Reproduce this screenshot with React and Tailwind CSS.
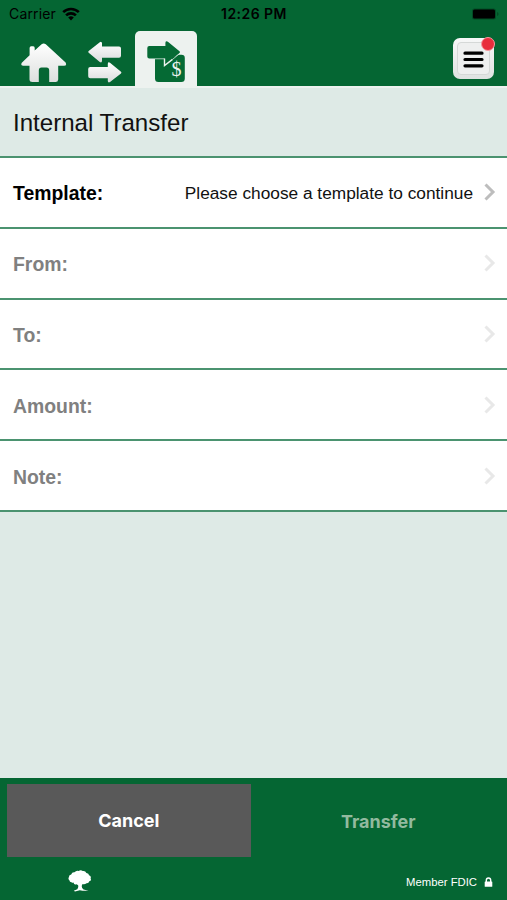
const fields = [
  { label: 'Template:', value: 'Please choose a template to continue', enabled: true },
  { label: 'From:' },
  { label: 'To:' },
  { label: 'Amount:' },
  { label: 'Note:' },
];

function StatusBar() {
  return (
    <div className="grid h-7 grid-cols-3 items-center pl-[9px] pr-[8px] font-['Inter',sans-serif] text-black">
      <div className="flex items-center gap-[6px] text-[14px] leading-7">
        <span className="tracking-[0.15px]">Carrier</span>
        <svg className="h-[14px] w-[18px]" viewBox="0 0 18 14" fill="none" stroke="currentColor" strokeWidth="2.6">
          <path d="M1.2 5.2a11 11 0 0 1 15.6 0" />
          <path d="M4.1 8.4a7 7 0 0 1 9.8 0" />
          <path d="M9 13.6 6.2 10.6a4 4 0 0 1 5.6 0Z" fill="currentColor" stroke="none" />
        </svg>
      </div>
      <div className="text-center text-[14px] font-semibold leading-7 tracking-[0.45px] whitespace-nowrap">12:26 PM</div>
      <div className="flex justify-end">
        <svg className="h-[12px] w-[27px]" viewBox="0 0 27 12">
          <rect x="0" y="0.5" width="24" height="11" rx="2.5" fill="#034c25" />
          <rect x="1" y="1.5" width="22" height="9" rx="1.5" fill="#000" />
          <path d="M25 4v4q1.6-.5 1.6-2t-1.6-2" fill="#034c25" />
        </svg>
      </div>
    </div>
  );
}

function HomeIcon() {
  return (
    <svg className="h-[40px] w-[46px]" viewBox="0 0 46 40">
      <defs>
        <linearGradient id="home" x1="0" y1="0" x2="0" y2="1">
          <stop offset="0" stopColor="#fff" />
          <stop offset="1" stopColor="#dddfde" />
        </linearGradient>
      </defs>
      <path
        d="M20.6 1.2Q22.7-.2 24.8 1.3L44.6 19.4Q46.2 22.5 43 22.8H37.2V36.5Q37 39 34.5 39H28.2V27.5Q28.2 24.4 25.5 24.4H20.5Q17.8 24.4 17.8 27.5V39H11.4Q8.6 39 8.5 36.5V22.8H2Q-.8 22.3.8 19.7L8.6 12.3V5Q8.6 3.3 10.2 3.3H12.2Q13.7 3.3 13.7 5V7.5Z"
        fill="url(#home)"
      />
    </svg>
  );
}

function TransferIcon() {
  return (
    <svg className="h-[42px] w-[35px]" viewBox="0 0 35 42">
      <defs>
        <linearGradient id="arrows" x1="0" y1="0" x2="0" y2="1">
          <stop offset="0" stopColor="#fff" />
          <stop offset="1" stopColor="#dadbdc" />
        </linearGradient>
      </defs>
      <path d="M.7 11.7Q-.2 10.8.7 10L11.8 1.2Q13.8 0 14 2.3V5.5H31Q33 5.5 33 7.5V14.7Q33 16.7 31 16.7H14V20.1Q13.7 22.3 11.8 21Z" fill="url(#arrows)" />
      <path d="M33 30.7Q33.9 31.5 33 32.4L22 41.1Q20 42 19.8 40V37.3H2.3Q.2 37.3.2 35.3V28Q.2 25.9 2.3 25.9H19.8V22.7Q20.1 20.5 22 21.7Z" fill="url(#arrows)" />
    </svg>
  );
}

function QuickTransferIcon() {
  return (
    <svg className="h-[42px] w-[39px]" viewBox="0 0 39 42">
      <path d="M8 16H27.5L31 13.8H34.5Q37.8 13.8 37.8 17V37.5Q37.8 41 34.3 41H11.5Q8 41 8 37.5Z" fill="#056a34" />
      <path
        d="M2.3 4.9H18.4V1.7Q18.8-.5 20.9.8L32.5 10.2Q33.4 11 32.5 12L18.2 23.6V17.4H2.3Q.3 17.4.3 15.4V6.9Q.3 4.9 2.3 4.9Z"
        fill="#056a34"
      />
      <path d="M17.5 17.6V24.6L25.5 18.4" fill="none" stroke="#edf2ef" strokeWidth="1.4" />
      <path d="M8 17.8H17.5M25.5 18.4 33 12.4" fill="none" stroke="#edf2ef" strokeWidth="0.7" />
      <text x="29.5" y="35" textAnchor="middle" fontSize="20" fontFamily="Liberation Serif, serif" fill="#edf2ef">$</text>
    </svg>
  );
}

function MenuButton() {
  return (
    <button className="relative flex h-[41px] w-[41px] items-center justify-center rounded-[7px] bg-gradient-to-b from-[#f7f8f8] to-[#dfe2e1]">
      <span className="flex h-[33px] w-[33px] items-center justify-center rounded-[4px] border border-[#d5d8d7] bg-[#eeefef]">
        <svg className="mt-px h-[17px] w-[21px]" viewBox="0 0 21 17" stroke="#000" strokeWidth="3.2" strokeLinecap="round">
          <path d="M2 2.2h17M2 8.5h17M2 14.8h17" />
        </svg>
      </span>
      <span className="absolute -top-px -right-[1px] h-[14px] w-[14px] rounded-full border border-[#f49aa0] bg-[#e82d3c]" />
    </button>
  );
}

function Chevron({ className }) {
  return (
    <svg className={`h-[18px] w-[12px] ${className}`} viewBox="0 0 12 18" fill="none" stroke="currentColor" strokeWidth="3">
      <path d="M1.5 1.5 9 9l-7.5 7.5" />
    </svg>
  );
}

function FieldRow({ label, value, enabled }) {
  return (
    <button className="flex w-full flex-1 items-center border-b-2 border-[#4b9370] bg-white pl-[13px] pr-[11px] text-left">
      <span className={`pt-[3px] text-[19.4px] font-bold ${enabled ? 'text-black' : 'text-[#808080]'}`}>{label}</span>
      <span className="ml-auto mr-[11px] pt-[3px] text-[17.3px] text-[#111]">{value}</span>
      <Chevron className={enabled ? 'text-[#bdbdbd]' : 'text-[#e8e8e8]'} />
    </button>
  );
}

function TreeLogo() {
  return (
    <svg className="h-[22px] w-[24px]" viewBox="0 0 24 22" fill="#fff">
      <path d="M3.5 12.2Q1.5 12.2 1.5 10.5-.3 8.8 1 7 .8 4.7 3.2 4.5 4 2 6.5 2.3 8.3.1 10.6.9 13-.4 14.7 1.1 17.3.6 18.4 2.9 21 3.1 21 5.3 23.5 6.2 22.6 8.4 23.8 10.6 21.3 11.3 20.7 13.6 18.5 13.3 16.5 14.9 14.5 14L13.7 16Q13.7 18.4 15.5 19.4L20.5 20.8 14.5 20.7 11.8 20.2 7 21.4 5.8 20.8 9.3 19.2Q10.7 17.4 10.1 15.3L8.6 14.2Q6 15.2 5.5 12.6Q4.3 13 3.5 12.2Z" />
    </svg>
  );
}

export default function App() {
  return (
    <div className="flex h-[900px] w-[507px] flex-col bg-[#deeae6] font-['Liberation_Sans',Arial,sans-serif]">
      <header className="h-[86px] bg-[#056633]">
        <StatusBar />
        <nav className="flex h-[58px] items-end pl-[21px] pr-[13px]">
          <button className="mb-[3px]"><HomeIcon /></button>
          <button className="mb-[3px] ml-[21px]"><TransferIcon /></button>
          <button className="ml-3 flex h-[55px] w-[62px] justify-center rounded-t-[5px] bg-[#edf2ef] pt-[10px]">
            <QuickTransferIcon />
          </button>
          <div className="mb-[7px] ml-auto"><MenuButton /></div>
        </nav>
      </header>

      <div className="flex h-[72px] items-center border-t-2 border-b-2 border-t-[#edf2ef] border-b-[#4b9370] pt-[3px] pl-[13px]">
        <h1 className="text-[24.1px] text-[#111]">Internal Transfer</h1>
      </div>

      <main className="flex h-[354px] flex-col">
        {fields.map((field) => (
          <FieldRow key={field.label} {...field} />
        ))}
      </main>

      <footer className="mt-auto h-[122px] bg-[#056633] px-[7px] pt-[6px]">
        <div className="flex h-[73px] font-['Inter',sans-serif] text-[18px] font-bold">
          <button className="w-[244px] bg-[#595959] text-white">Cancel</button>
          <button className="ml-[6px] w-[244px] pt-[2px] text-[#92ba9f]">Transfer</button>
        </div>
        <div className="flex items-center justify-between pt-[13px] pl-[61px] pr-[7px] text-white">
          <TreeLogo />
          <div className="flex items-center gap-[7px] pt-[2px] text-[11.3px]">
            <span>Member FDIC</span>
            <svg className="h-[10px] w-[9px]" viewBox="0 0 9 10">
              <path d="M2.3 5V3.2a2.2 2.2 0 0 1 4.4 0V5" fill="none" stroke="#fff" strokeWidth="1.4" />
              <rect x="0.7" y="4.4" width="7.6" height="5.4" rx="0.6" fill="#fff" />
            </svg>
          </div>
        </div>
      </footer>
    </div>
  );
}
